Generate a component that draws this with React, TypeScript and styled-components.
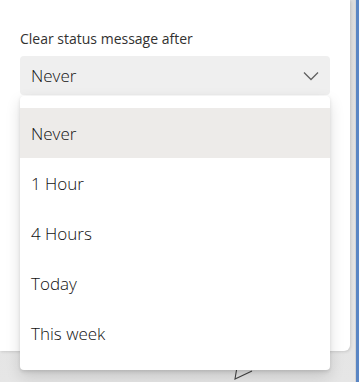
import React from "react";
import styled, { createGlobalStyle } from "styled-components";

const Global = createGlobalStyle`
  html, body { margin: 0; padding: 0; }
  body { width: 359px; height: 382px; overflow: hidden; font-family: "Open Sans", "Noto Sans", sans-serif; }
`;

const Page = styled.div`
  display: flex;
  width: 359px;
  height: 382px;
`;

const Main = styled.div`
  position: relative;
  width: 356px;
  height: 382px;
  background: linear-gradient(180deg, #dcdcdc 0%, #e6e6e6 100%);
  border-right: 1px solid #d4d4d4;
  box-sizing: border-box;
`;

const Strip = styled.div`
  width: 3px;
  background: #5a86c4;
`;

const Panel = styled.div`
  width: 350px;
  height: 351px;
  background: #ffffff;
  border-bottom-right-radius: 6px;
  box-shadow: 1px 1px 3px rgba(0, 0, 0, 0.12);
  padding: 29px 20px 0 20px;
  box-sizing: border-box;
  display: flex;
  flex-direction: column;
`;

const Label = styled.div`
  font-size: 14px;
  line-height: 20px;
  font-weight: 400;
  color: #323130;
  margin-bottom: 7px;
`;

const Select = styled.div`
  width: 310px;
  height: 39px;
  background: #efefef;
  border-radius: 4px;
  display: flex;
  align-items: center;
  justify-content: space-between;
  padding: 0 11px;
  box-sizing: border-box;
  font-size: 17px;
  font-weight: 300;
  color: #111111;
`;

const Menu = styled.div`
  position: absolute;
  left: 20px;
  top: 96px;
  width: 310px;
  padding: 12px 0;
  background: #ffffff;
  border-radius: 4px;
  box-shadow: 0 6.4px 14.4px rgba(0, 0, 0, 0.132), 0 1.2px 3.6px rgba(0, 0, 0, 0.108);
  display: flex;
  flex-direction: column;
`;

const Item = styled.div<{ $active?: boolean }>`
  height: 50px;
  display: flex;
  align-items: center;
  padding-left: 11px;
  font-size: 17px;
  font-weight: 300;
  color: #111111;
  background: ${(p) => (p.$active ? "#edebe9" : "transparent")};
`;

const Stroke = styled.svg`
  position: absolute;
  left: 232px;
  top: 366px;
`;

const items = ["Never", "1 Hour", "4 Hours", "Today", "This week"];

export default function App() {
  return (
    <Page>
      <Global />
      <Main>
        <Panel>
          <Label>Clear status message after</Label>
          <Select>
            <span>Never</span>
            <svg width="16" height="10" viewBox="0 0 16 10">
              <polyline points="1,1.5 8,8.5 15,1.5" fill="none" stroke="#616161" strokeWidth="1.3" />
            </svg>
          </Select>
        </Panel>
        <Stroke width="24" height="16" viewBox="0 0 24 16">
          <polyline points="4.5,4 3,13 20,5" fill="none" stroke="#444" strokeWidth="1.1" />
        </Stroke>
        <Menu>
          {items.map((t, i) => (
            <Item key={t} $active={i === 0}>
              {t}
            </Item>
          ))}
        </Menu>
      </Main>
      <Strip />
    </Page>
  );
}
